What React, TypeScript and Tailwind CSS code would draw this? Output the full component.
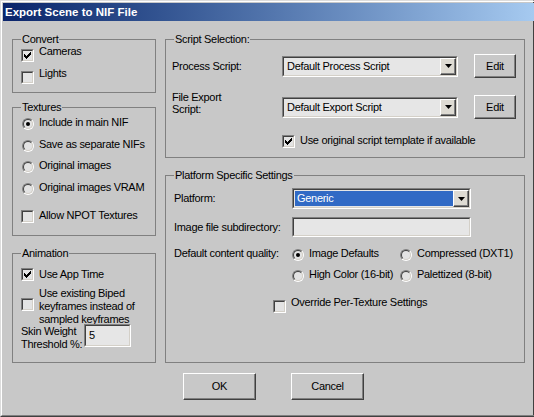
import React from 'react'

const sunken = 'border border-t-[#808080] border-l-[#808080] border-r-white border-b-white'
const sunkenInner = 'border border-t-[#404040] border-l-[#404040] border-r-[#d4d0c8] border-b-[#d4d0c8]'
const raised = 'border border-t-white border-l-white border-r-[#404040] border-b-[#404040] shadow-[inset_-1px_-1px_0_#808080]'

function CheckBox({ checked }: { checked?: boolean }) {
  return (
    <span className={`flex w-[13px] h-[13px] shrink-0 ${sunken}`}>
      <span className={`flex flex-1 items-center justify-center ${sunkenInner} bg-[#e3e3e3]`}>
        {checked && (
          <svg width="7" height="7" viewBox="0 0 7 7">
            <path d="M0 2h1v1h1v1h1V3h1V2h1V1h1V0h1v3H6v1H5v1H4v1H3v1H2V6H1V5H0z" fill="#000" />
          </svg>
        )}
      </span>
    </span>
  )
}

function Radio({ checked }: { checked?: boolean }) {
  return (
    <span className="flex w-[12px] h-[12px] shrink-0 rounded-full border border-t-[#808080] border-l-[#808080] border-r-white border-b-white">
      <span className="flex flex-1 items-center justify-center rounded-full border border-t-[#404040] border-l-[#404040] border-r-[#d4d0c8] border-b-[#d4d0c8] bg-[#e3e3e3]">
        {checked && <span className="w-[4px] h-[4px] rounded-full bg-black" />}
      </span>
    </span>
  )
}

function CheckRow({ label, checked, className = '', boxClass = 'mt-[4px]' }: {
  label: React.ReactNode
  checked?: boolean
  className?: string
  boxClass?: string
}) {
  return (
    <div className={`flex items-start gap-[5px] ${className}`}>
      <span className={boxClass}><CheckBox checked={checked} /></span>
      <span className="leading-[13px]">{label}</span>
    </div>
  )
}

function RadioRow({ label, checked, className = '' }: { label: string; checked?: boolean; className?: string }) {
  return (
    <div className={`flex items-start gap-[5px] ${className}`}>
      <span className="mt-[2px]"><Radio checked={checked} /></span>
      <span className="leading-[13px] whitespace-nowrap">{label}</span>
    </div>
  )
}

function ArrowButton() {
  return (
    <span className={`flex w-[16px] items-center justify-center bg-[#dedbd3] ${raised}`}>
      <svg width="7" height="4" viewBox="0 0 7 4">
        <polygon points="0,0 7,0 3.5,4" fill="#000" />
      </svg>
    </span>
  )
}

function Combo({ value, selected, className = '' }: { value: string; selected?: boolean; className?: string }) {
  return (
    <div className={`flex h-[21px] ${sunken} ${className}`}>
      <div className={`flex flex-1 ${sunkenInner} bg-[#e6e6e6]`}>
        <div className={`flex flex-1 items-center pl-[2px] m-px mr-0 leading-[13px] ${selected ? 'bg-[#316ac5] text-white' : ''}`}>
          {value}
        </div>
        <ArrowButton />
      </div>
    </div>
  )
}

function TextBox({ value = '', className = '' }: { value?: string; className?: string }) {
  return (
    <div className={`flex ${sunken} ${className}`}>
      <div className={`flex flex-1 items-center pl-[3px] leading-[13px] ${sunkenInner} bg-[#e6e6e6]`}>
        {value}
      </div>
    </div>
  )
}

function Button({ label, className = '' }: { label: string; className?: string }) {
  return (
    <button className={`flex items-center justify-center bg-[#c8c8c8] leading-[13px] ${raised} ${className}`}>
      {label}
    </button>
  )
}

function Group({ title, className = '', children }: { title: string; className?: string; children: React.ReactNode }) {
  return (
    <fieldset className={`border border-[#808080] ${className}`}>
      <legend className="ml-[8px] px-[1px] leading-[13px]">{title}</legend>
      {children}
    </fieldset>
  )
}

export default function App() {
  return (
    <div className="w-[534px] h-[417px] flex border border-t-[#dcdcdc] border-l-[#dcdcdc] border-r-[#404040] border-b-[#404040] bg-[#c8c8c8] font-['Liberation_Sans',Arial,sans-serif] text-[11px] tracking-[-0.3px] text-black select-none">
      <div className="flex flex-1 flex-col p-px border border-t-white border-l-white border-r-[#808080] border-b-[#808080]">
        {/* Title bar */}
        <div className="h-[18px] shrink-0 flex items-center pl-[2px] bg-gradient-to-r from-[#0a246a] to-[#a6caf0]">
          <span className="text-white font-bold text-[11.5px] tracking-normal leading-[14px]">Export Scene to NIF File</span>
        </div>

        <div className="flex gap-[9px] pt-[12px] px-[9px]">
          {/* Left column */}
          <div className="flex flex-col w-[144px]">
            <Group title="Convert">
              <div className="pl-[8px] pb-[3px]">
                <CheckRow label="Cameras" checked className="-mt-px h-[22px]" />
                <CheckRow label="Lights" className="h-[22px]" />
              </div>
            </Group>

            <Group title="Textures" className="mt-[8px]">
              <div className="pl-[9px] pt-[2px] pb-[13px]">
                <RadioRow label="Include in main NIF" checked className="h-[22px]" />
                <RadioRow label="Save as separate NIFs" className="h-[21px]" />
                <RadioRow label="Original images" className="h-[22px]" />
                <RadioRow label="Original images VRAM" className="h-[21px]" />
                <CheckRow label="Allow NPOT Textures" className="mt-[7px] -ml-px h-[13px]" boxClass="mt-[1px]" />
              </div>
            </Group>

            <Group title="Animation" className="mt-[11px]">
              <div className="pl-[8px] pt-[8px] pb-[14px]">
                <CheckRow label="Use App Time" checked className="h-[13px]" boxClass="mt-0" />
                <CheckRow
                  label={<>Use existing Biped<br />keyframes instead of<br />sampled keyframes</>}
                  className="mt-[6px]"
                  boxClass="mt-[11px]"
                />
                <div className="flex items-start -mt-[2px] h-[24px]">
                  <span className="w-[63px] pt-px leading-[13px]">Skin Weight<br />Threshold %:</span>
                  <TextBox value="5" className="w-[47px] h-[23px]" />
                </div>
              </div>
            </Group>
          </div>

          {/* Right column */}
          <div className="flex flex-col w-[360px]">
            <Group title="Script Selection:">
              <div className="pl-[6px] pt-[8px] pb-[9px]">
                <div className="flex items-center h-[24px]">
                  <span className="w-[110px] leading-[13px]">Process Script:</span>
                  <Combo value="Default Process Script" className="w-[176px]" />
                  <Button label="Edit" className="ml-[16px] w-[42px] h-[24px]" />
                </div>
                <div className="flex items-center h-[24px] mt-[17px]">
                  <span className="w-[110px] leading-[12px] self-start -mt-[4px]">File Export<br />Script:</span>
                  <Combo value="Default Export Script" className="w-[176px]" />
                  <Button label="Edit" className="ml-[16px] w-[42px] h-[24px]" />
                </div>
                <CheckRow
                  label="Use original script template if available"
                  checked
                  className="mt-[15px] ml-[110px] h-[14px] gap-[4px]"
                  boxClass="mt-[1px]"
                />
              </div>
            </Group>

            <Group title="Platform Specific Settings" className="mt-[11px]">
              <div className="pl-[8px] pt-[6px] pb-[49px]">
                <div className="flex items-center h-[21px]">
                  <span className="w-[118px] leading-[13px]">Platform:</span>
                  <Combo value="Generic" selected className="w-[179px]" />
                </div>
                <div className="flex items-center h-[20px] mt-[8px]">
                  <span className="w-[118px] leading-[13px]">Image file subdirectory:</span>
                  <TextBox className="w-[179px] h-[20px]" />
                </div>
                <div className="flex items-start mt-[10px]">
                  <span className="w-[118px] leading-[13px]">Default content quality:</span>
                  <div className="grid grid-cols-[108px_auto]">
                    <RadioRow label="Image Defaults" checked className="h-[21px]" />
                    <RadioRow label="Compressed (DXT1)" className="h-[21px]" />
                    <RadioRow label="High Color (16-bit)" className="h-[21px]" />
                    <RadioRow label="Palettized (8-bit)" className="h-[21px]" />
                  </div>
                </div>
                <CheckRow label="Override Per-Texture Settings" className="mt-[7px] ml-[99px]" boxClass="mt-[4px]" />
              </div>
            </Group>
          </div>
        </div>

        {/* Buttons */}
        <div className="flex mt-[10px] pl-[180px]">
          <Button label="OK" className="w-[73px] h-[27px]" />
          <Button label="Cancel" className="ml-[35px] w-[73px] h-[27px]" />
        </div>
      </div>
    </div>
  )
}
